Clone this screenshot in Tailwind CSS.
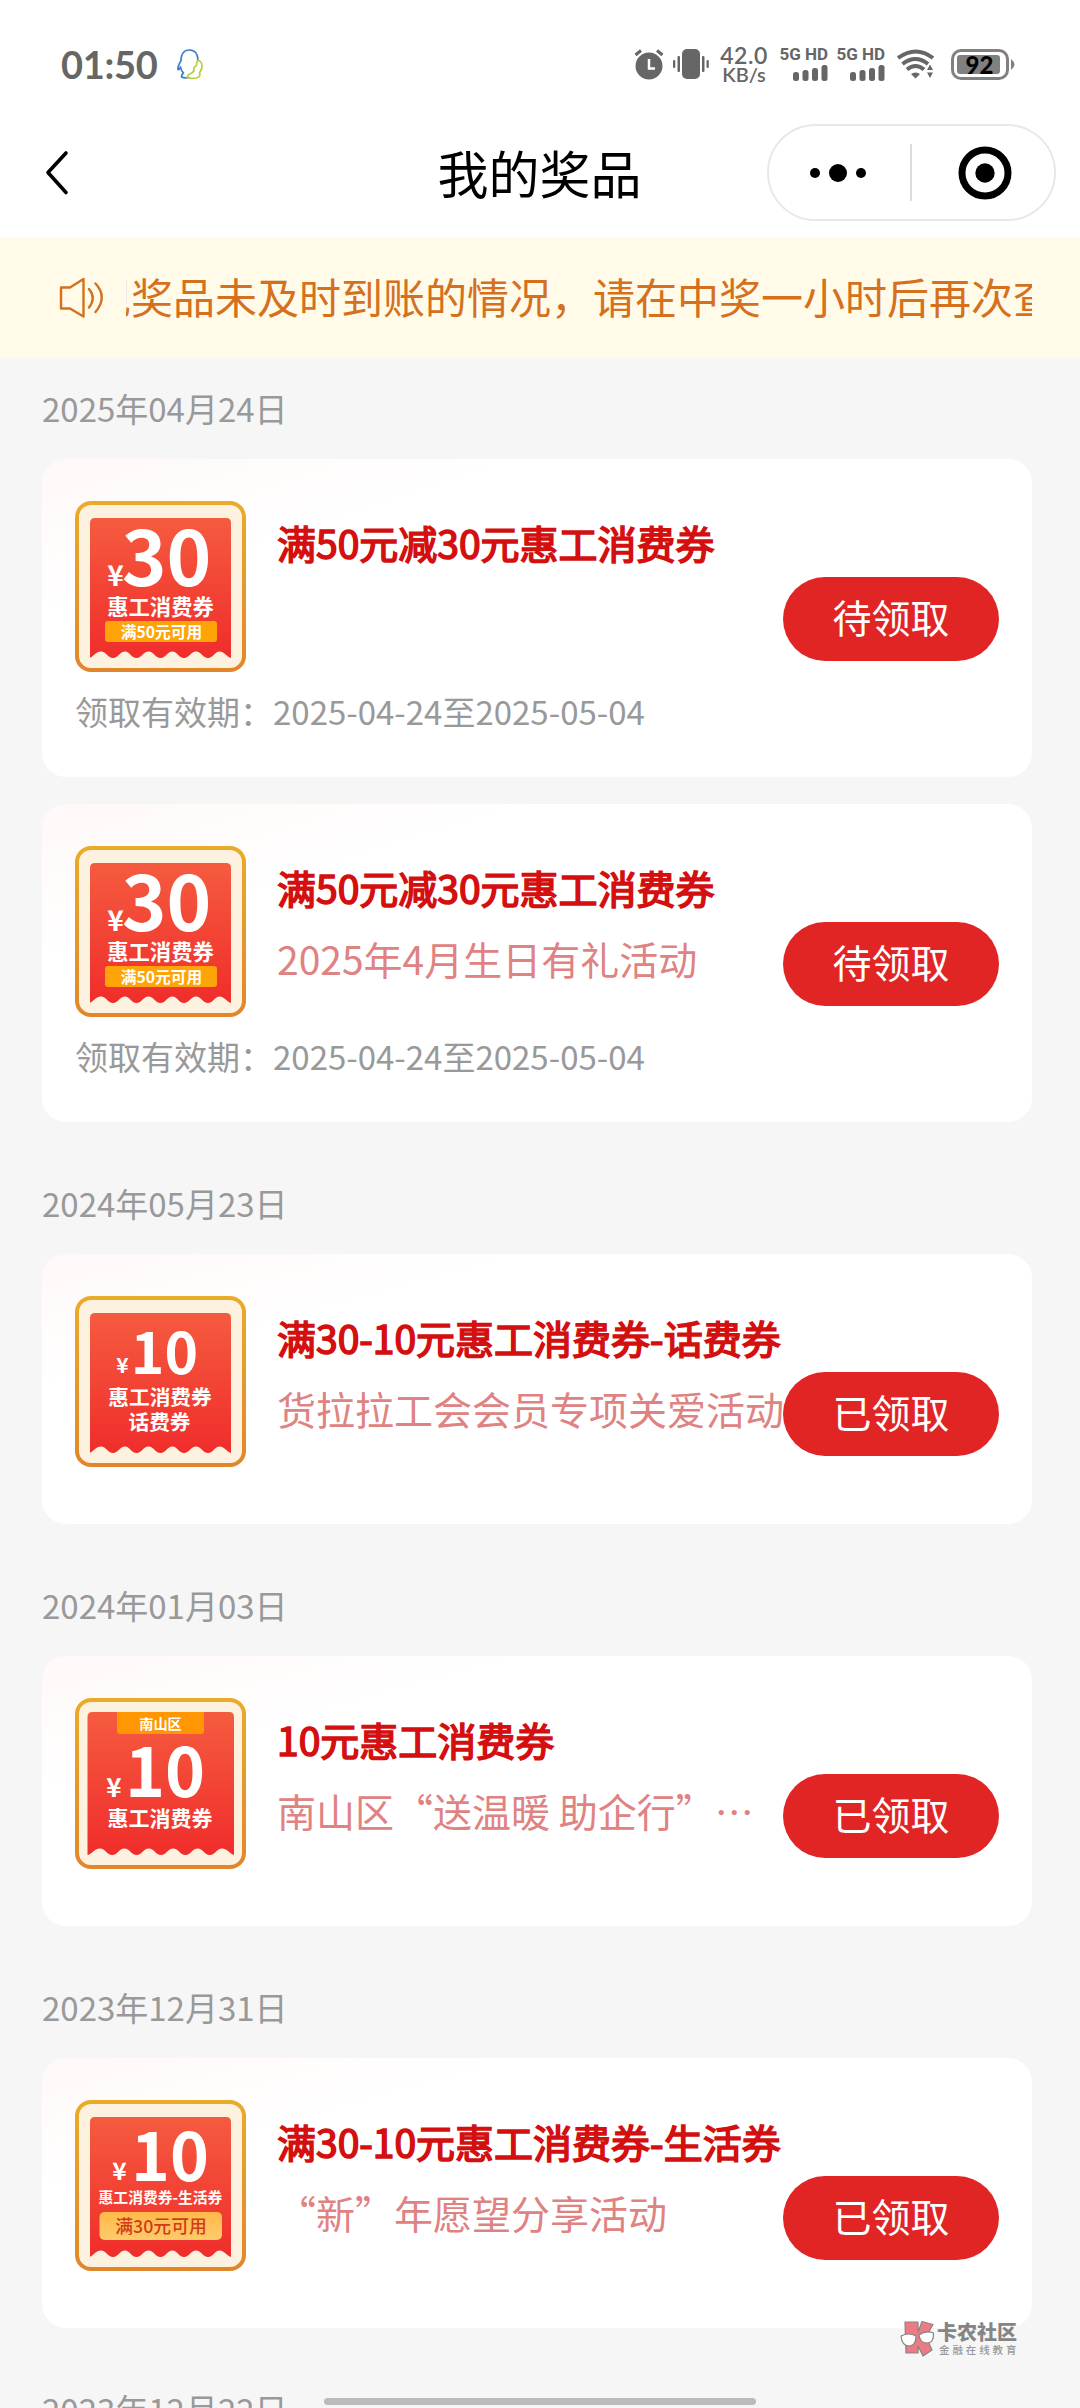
<!DOCTYPE html>
<html lang="zh-CN">
<head>
<meta charset="utf-8">
<title>我的奖品</title>
<script src="https://cdn.jsdelivr.net/npm/@tailwindcss/browser@4"></script>
</head>
<body class="bg-[#f6f6f6] font-['Noto_Sans_CJK_SC',sans-serif]">

<svg width="0" height="0" class="absolute">
  <defs>
    <linearGradient id="frame" x1="0" y1="0" x2="0" y2="1"><stop offset="0" stop-color="#eaab2a"/><stop offset="1" stop-color="#e2862c"/></linearGradient>
    <linearGradient id="red" x1="0" y1="0" x2="0" y2="1"><stop offset="0" stop-color="#f55b3f"/><stop offset="1" stop-color="#f02d2b"/></linearGradient>
    <linearGradient id="amber" x1="0" y1="0" x2="0" y2="1"><stop offset="0" stop-color="#ffb94a"/><stop offset="1" stop-color="#ffcb6a"/></linearGradient>
    <symbol id="coupon" viewBox="0 0 171 171">
      <rect x="2" y="2" width="167" height="167" rx="14" fill="#fdf1df" stroke="url(#frame)" stroke-width="4"/>
      <path fill="url(#red)" d="M15 157V22q0-5 5-5H151q5 0 5 5V157c-5-2-7-6.500-11.500-6.500c-4.500 0-6.500 6.500-11.500 6.500s-7-6.500-12-6.500s-7 6.500-12 6.500s-7-6.500-11.500-6.500c-5 0-7 6.500-12 6.500s-7-6.500-12-6.500s-7 6.500-12 6.500s-7-6.500-11.500-6.500c-5 0-7 6.500-12 6.500s-7-6.500-12-6.500s-7 4.500-11.500 6.500z"/>
    </symbol>
  </defs>
</svg>

<div class="relative w-[1080px] h-[2408px] overflow-hidden bg-[#f6f6f6]">

  <header class="h-[237px] bg-white flex flex-col">
    <div class="h-[124px] flex items-center pt-1 pl-[61px] pr-[65px] font-['Lato',sans-serif] text-[#666] leading-none">
      <span class="text-[38px] font-bold tracking-[-0.3px] w-[99px]">01:50</span>
      <svg class="ml-[16px]" width="28" height="32" viewBox="0 0 28 32" fill="none" stroke-width="1.700" stroke-linejoin="round">
        <path stroke="#3c7ccb" d="M22 13C22 6 19 2 13.500 2S5 6 5 12.500C3 16 1.500 18.500 2 21.500q1.200.500 2.500-2.500q.500 3.500 3 6q-2 1-2 4q3 1.500 8 .500"/>
        <path stroke="#b7cf45" d="M21.500 12.500q4 0 4.500 5c.500 4-2 6-2.500 7.500c1 2 .500 4-3 5q-5 1-9.500-.500q1-3.500 4-4l3-2.500q-1-3 1-4.500q2-.500 1.500-2.500z"/>
      </svg>
      <div class="ml-auto flex items-center">
        <svg width="30" height="31" viewBox="0 0 30 31"><circle cx="15" cy="17" r="13.500" fill="#666"/><path d="M1.500 6 7 1.500M23 1.500 28.500 6" stroke="#666" stroke-width="3"/><path d="M15 10v9.500h6" fill="none" stroke="#fff" stroke-width="2.500"/></svg>
        <svg class="ml-[9px]" width="36" height="31" viewBox="0 0 36 31" fill="#666"><rect x="9" y="0" width="18" height="30" rx="5"/><rect x="4.500" y="7" width="2.500" height="16" rx="1"/><rect x="0" y="11" width="2.300" height="8" rx="1"/><rect x="29" y="7" width="2.500" height="16" rx="1"/><rect x="33.500" y="11" width="2.300" height="8" rx="1"/></svg>
        <div class="ml-[11px] w-[48px] flex flex-col items-center"><span class="text-[23px] font-semibold leading-[20px] tracking-[0.5px]">42.0</span><span class="text-[20px] font-semibold leading-[19px]">KB/s</span></div>
        <div class="ml-[12px] w-[48px] flex flex-col items-end gap-[4px]"><span class="font-['Roboto',sans-serif] text-[17px] font-bold leading-[13px] whitespace-nowrap">5G HD</span>
          <svg width="36" height="16" fill="#666"><rect x="1" y="7" width="6" height="9" rx="2.500"/><rect x="10.500" y="5" width="6" height="11" rx="2.500"/><rect x="20" y="3" width="6" height="13" rx="2.500"/><rect x="29.500" y="0" width="6" height="16" rx="2.500"/></svg></div>
        <div class="ml-[9px] w-[48px] flex flex-col items-end gap-[4px]"><span class="font-['Roboto',sans-serif] text-[17px] font-bold leading-[13px] whitespace-nowrap">5G HD</span>
          <svg width="36" height="16" fill="#666"><rect x="1" y="7" width="6" height="9" rx="2.500"/><rect x="10.500" y="5" width="6" height="11" rx="2.500"/><rect x="20" y="3" width="6" height="13" rx="2.500"/><rect x="29.500" y="0" width="6" height="16" rx="2.500"/></svg></div>
        <svg class="ml-[12px]" width="38" height="30" viewBox="0 0 38 30" fill="none" stroke="#666" stroke-width="4"><path d="M1 9Q19-4 36 9M5.500 15Q18.500 5 31 15M10 20.500Q18.500 13.500 27 20.500"/><path fill="#666" stroke="none" d="M14 25q4.500-3 9 0l-4.500 4.500zM30 21l3-5.500 3 5.500zM30 23.500h6L33 29z"/></svg>
        <svg class="ml-[16px]" width="64" height="31" viewBox="0 0 64 31"><rect x="1.500" y="1.500" width="55" height="28" rx="8.500" fill="#fff" stroke="#808080" stroke-width="3"/><rect x="6" y="6" width="43" height="19" rx="3" fill="#808080"/><path d="M60 10q7 5.500 0 11z" fill="#808080"/><text x="28.500" y="24.500" text-anchor="middle" font-family="Lato" font-weight="900" font-size="24" fill="#000">92</text></svg>
      </div>
    </div>
    <div class="h-[97px] flex items-center justify-between pl-[44px] pr-[24px]">
      <svg class="w-[289px]" height="48" viewBox="0 0 289 48" fill="none"><path d="M22 4 4 23.500 22 43.500" stroke="#000" stroke-width="3.600" stroke-linecap="round" stroke-linejoin="round"/></svg>
      <h1 class="text-[51px] leading-none text-black -ml-[21px] pb-[1px]">我的奖品</h1>
      <div class="w-[289px] h-[97px] rounded-full border-2 border-[#e8e8e8] flex items-center">
        <svg class="w-[141px]" height="20" viewBox="0 0 141 20"><circle cx="46" cy="10" r="5"/><circle cx="69" cy="10" r="9"/><circle cx="92" cy="10" r="5"/></svg>
        <div class="w-[2px] h-[57px] bg-[#dcdcdc]"></div>
        <svg class="ml-[46px]" width="54" height="54" viewBox="0 0 54 54"><circle cx="27" cy="27" r="23" fill="none" stroke="#000" stroke-width="7"/><circle cx="27" cy="27" r="9.700"/></svg>
      </div>
    </div>
  </header>

  <div class="h-[121px] bg-[#fffbe8] flex items-center pl-[58px] pr-[48px] text-[#d4701e]">
    <svg width="48" height="42" viewBox="0 0 48 42" fill="none" stroke="currentColor" stroke-width="2.400" stroke-linecap="round" stroke-linejoin="round"><path d="M3 10.500h9L25.500 2v37.500L12 31.500H3zM31 12q7.500 9 0 18.500M37.500 6.500Q50 20 37.500 35"/></svg>
    <div class="ml-[20px] flex-1 overflow-hidden pb-[4px]"><p class="-ml-[37px] text-[42px] leading-[60px] whitespace-nowrap">现奖品未及时到账的情况，请在中奖一小时后再次查看</p></div>
  </div>

  <main class="pl-[42px] pr-[48px] flex flex-col">
    <h2 class="h-[101px] flex items-center text-[33px] text-[#999]">2025年04月24日</h2>
    <div class="flex flex-col gap-[27px]">
      <article class="h-[318px] rounded-[24px] bg-linear-to-br from-[#fff8f8] via-white via-25% to-white pl-[33px] pr-[33px] pt-[42px]">
        <div class="flex">
          <svg class="shrink-0" width="171" height="171" font-family="Noto Sans CJK SC" font-weight="700" fill="#fff" text-anchor="middle"><use href="#coupon"/><text x="40.500" y="85" font-size="28">¥</text><text x="91.500" y="85" font-size="76">30</text><text x="85.500" y="113.500" font-size="21.300">惠工消费券</text><rect x="30" y="120" width="112" height="21" rx="3" fill="#ffa408"/><text x="86.500" y="136.500" font-size="15.700">满50元可用</text></svg>
          <div class="ml-[31px] w-[506px] pt-[13px] whitespace-nowrap text-[39px] leading-[56px]"><h3 class="text-[#d40f0f] [-webkit-text-stroke:1.6px_#d40f0f]">满50元减30元惠工消费券</h3></div>
          <button class="mt-[76px] w-[216px] h-[84px] pb-[5px] shrink-0 rounded-full bg-[#e12525] text-white text-[39px] leading-none">待领取</button>
        </div>
        <p class="mt-[15px] text-[33px] leading-[48px] text-[#999]">领取有效期：2025-04-24至2025-05-04</p>
      </article>
      <article class="h-[318px] rounded-[24px] bg-linear-to-br from-[#fff8f8] via-white via-25% to-white pl-[33px] pr-[33px] pt-[42px]">
        <div class="flex">
          <svg class="shrink-0" width="171" height="171" font-family="Noto Sans CJK SC" font-weight="700" fill="#fff" text-anchor="middle"><use href="#coupon"/><text x="40.500" y="85" font-size="28">¥</text><text x="91.500" y="85" font-size="76">30</text><text x="85.500" y="113.500" font-size="21.300">惠工消费券</text><rect x="30" y="120" width="112" height="21" rx="3" fill="#ffa408"/><text x="86.500" y="136.500" font-size="15.700">满50元可用</text></svg>
          <div class="ml-[31px] w-[506px] pt-[13px] whitespace-nowrap text-[39px] leading-[56px]"><h3 class="text-[#d40f0f] [-webkit-text-stroke:1.6px_#d40f0f]">满50元减30元惠工消费券</h3><p class="mt-[15px] text-[#df8282]">2025年4月生日有礼活动</p></div>
          <button class="mt-[76px] w-[216px] h-[84px] pb-[5px] shrink-0 rounded-full bg-[#e12525] text-white text-[39px] leading-none">待领取</button>
        </div>
        <p class="mt-[15px] text-[33px] leading-[48px] text-[#999]">领取有效期：2025-04-24至2025-05-04</p>
      </article>
    </div>

    <h2 class="mt-[31px] h-[101px] flex items-center text-[33px] text-[#999]">2024年05月23日</h2>
    <article class="h-[270px] rounded-[24px] bg-linear-to-br from-[#fff8f8] via-white via-25% to-white pl-[33px] pr-[33px] pt-[42px]">
      <div class="flex">
        <svg class="shrink-0" width="171" height="171" font-family="Noto Sans CJK SC" font-weight="700" fill="#fff" text-anchor="middle"><use href="#coupon"/><text x="47.500" y="77" font-size="21">¥</text><text x="89.500" y="77.500" font-size="57">10</text><text x="85" y="109" font-size="20.700">惠工消费券</text><text x="84.500" y="133.500" font-size="20.700">话费券</text></svg>
        <div class="ml-[31px] w-[506px] pt-[13px] whitespace-nowrap text-[39px] leading-[56px]"><h3 class="text-[#d40f0f] [-webkit-text-stroke:1.6px_#d40f0f]">满30-10元惠工消费券-话费券</h3><p class="mt-[15px] text-[#df8282]">货拉拉工会会员专项关爱活动</p></div>
        <button class="mt-[76px] w-[216px] h-[84px] pb-[5px] shrink-0 rounded-full bg-[#e12525] text-white text-[39px] leading-none">已领取</button>
      </div>
    </article>

    <h2 class="mt-[31px] h-[101px] flex items-center text-[33px] text-[#999]">2024年01月03日</h2>
    <article class="h-[270px] rounded-[24px] bg-linear-to-br from-[#fff8f8] via-white via-25% to-white pl-[33px] pr-[33px] pt-[42px]">
      <div class="flex">
        <svg class="shrink-0" width="171" height="171" font-family="Noto Sans CJK SC" font-weight="700" fill="#fff" text-anchor="middle"><rect x="2" y="2" width="167" height="167" rx="14" fill="#fdf1df" stroke="url(#frame)" stroke-width="4"/><path fill="url(#red)" d="M12.500 157V19q0-5 5-5H154q5 0 5 5V157c-5-2-7-6.500-12-6.500s-7 6.500-12.200 6.500s-7-6.500-12.200-6.500s-7 6.500-12.200 6.500s-7-6.500-12.200-6.500s-7 6.500-12.200 6.500s-7-6.500-12.200-6.500s-7 6.500-12.200 6.500s-7-6.500-12.200-6.500s-7 6.500-12.200 6.500s-7-6.500-12.200-6.500s-7 4.500-12.200 6.500z"/><path d="M42 14h87v19q0 3-3 3H45q-3 0-3-3z" fill="#ff9602"/><text x="85.500" y="31" font-size="14.200">南山区</text><text x="39" y="98.500" font-size="26">¥</text><text x="90" y="99" font-size="68">10</text><text x="85" y="128" font-size="21">惠工消费券</text></svg>
        <div class="ml-[31px] w-[506px] pt-[13px] whitespace-nowrap text-[39px] leading-[56px]"><h3 class="text-[#d40f0f] [-webkit-text-stroke:1.6px_#d40f0f]">10元惠工消费券</h3><p class="mt-[15px] text-[#df8282]">南山区“送温暖 助企行”…</p></div>
        <button class="mt-[76px] w-[216px] h-[84px] pb-[5px] shrink-0 rounded-full bg-[#e12525] text-white text-[39px] leading-none">已领取</button>
      </div>
    </article>

    <h2 class="mt-[31px] h-[101px] flex items-center text-[33px] text-[#999]">2023年12月31日</h2>
    <article class="h-[270px] rounded-[24px] bg-linear-to-br from-[#fff8f8] via-white via-25% to-white pl-[33px] pr-[33px] pt-[42px]">
      <div class="flex">
        <svg class="shrink-0" width="171" height="171" font-family="Noto Sans CJK SC" font-weight="700" fill="#fff" text-anchor="middle"><use href="#coupon"/><text x="44.500" y="79.500" font-size="24.500">¥</text><text x="95" y="80.500" font-size="66">10</text><text x="85.500" y="102.500" font-size="14.800">惠工消费券-生活券</text><rect x="24.500" y="112" width="122.500" height="28" rx="5" fill="url(#amber)"/><text x="86" y="132.500" font-size="17.800" font-weight="500" fill="#d33a17">满30元可用</text></svg>
        <div class="ml-[31px] w-[506px] pt-[13px] whitespace-nowrap text-[39px] leading-[56px]"><h3 class="text-[#d40f0f] [-webkit-text-stroke:1.6px_#d40f0f]">满30-10元惠工消费券-生活券</h3><p class="mt-[15px] text-[#df8282]">“新”年愿望分享活动</p></div>
        <button class="mt-[76px] w-[216px] h-[84px] pb-[5px] shrink-0 rounded-full bg-[#e12525] text-white text-[39px] leading-none">已领取</button>
      </div>
    </article>
    <h2 class="mt-[31px] h-[101px] flex items-center text-[33px] text-[#999]">2023年12月22日</h2>
  </main>

  <!-- community watermark -->
  <div class="absolute left-[900px] top-[2320px] flex items-center gap-[2px] text-[#858585]">
    <svg width="35" height="37" viewBox="0 0 35 37" stroke="#858585" stroke-width="1.200" stroke-linejoin="round"><path fill="#ee7a86" d="M5 2h13v10l4-10.500 11 3-7 12 6 13.500-9 6-5-10v7H6z"/><path fill="#fff" d="M1 16q8-4 15 0q0 10-7 10T1 16zM19 15q7-5 14.500-2q.500 10-6.500 10t-8-8z"/></svg>
    <div class="flex flex-col"><span class="text-[20px] leading-[22px] font-black">卡农社区</span><span class="pl-[2px] text-[10.500px] leading-[13px] font-medium tracking-[2.900px] text-[#999]">金融在线教育</span></div>
  </div>

  <!-- home indicator -->
  <div class="absolute left-[324px] top-[2398px] w-[432px] h-[7px] rounded-full bg-[#bbb]"></div>
</div>
</body>
</html>
